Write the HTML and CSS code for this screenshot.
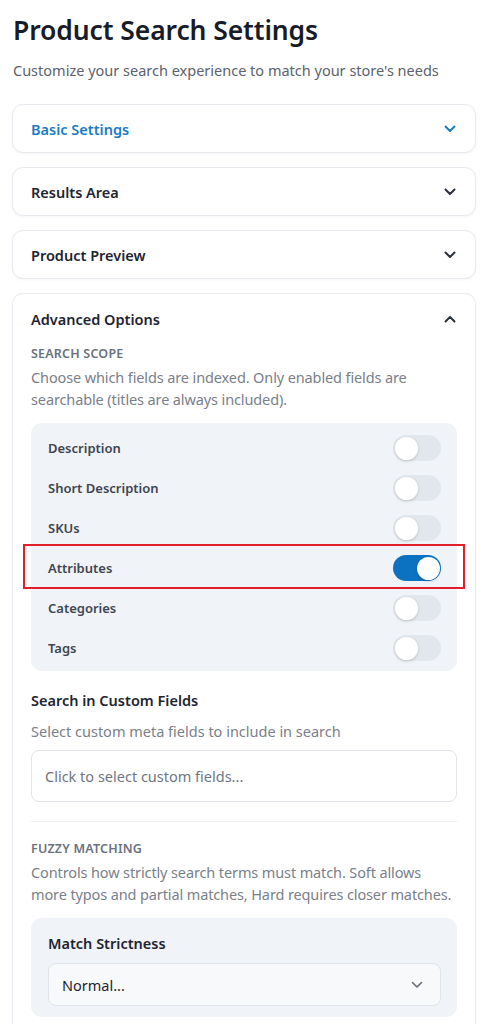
FILE: index.html
```html
<!DOCTYPE html>
<html lang="en">
<head>
<meta charset="utf-8">
<title>Product Search Settings</title>
<link rel="stylesheet" href="styles.css">
</head>
<body>
<div class="page">
  <h1 class="title">Product Search Settings</h1>
  <p class="subtitle">Customize your search experience to match your store's needs</p>

  <div class="cards">
    <section class="card">
      <div class="card-head active">
        <span>Basic Settings</span>
        <svg class="chev" width="12" height="8" viewBox="0 0 12 8"><polyline points="1.5,1.5 6,6 10.5,1.5" fill="none" stroke="currentColor" stroke-width="2" stroke-linecap="round" stroke-linejoin="round"/></svg>
      </div>
    </section>
    <section class="card">
      <div class="card-head">
        <span>Results Area</span>
        <svg class="chev" width="12" height="8" viewBox="0 0 12 8"><polyline points="1.5,1.5 6,6 10.5,1.5" fill="none" stroke="currentColor" stroke-width="2" stroke-linecap="round" stroke-linejoin="round"/></svg>
      </div>
    </section>
    <section class="card">
      <div class="card-head">
        <span>Product Preview</span>
        <svg class="chev" width="12" height="8" viewBox="0 0 12 8"><polyline points="1.5,1.5 6,6 10.5,1.5" fill="none" stroke="currentColor" stroke-width="2" stroke-linecap="round" stroke-linejoin="round"/></svg>
      </div>
    </section>
    <section class="card">
      <div class="card-head open">
        <span>Advanced Options</span>
        <svg class="chev" width="12" height="8" viewBox="0 0 12 8"><polyline points="1.5,6.5 6,2 10.5,6.5" fill="none" stroke="currentColor" stroke-width="2" stroke-linecap="round" stroke-linejoin="round"/></svg>
      </div>
      <div class="card-body">
        <div class="section-label">Search Scope</div>
        <p class="desc">Choose which fields are indexed. Only enabled fields are searchable (titles are always included).</p>
        <div class="panel toggles">
          <div class="row"><span>Description</span><span class="toggle"><span class="knob"></span></span></div>
          <div class="row"><span>Short Description</span><span class="toggle"><span class="knob"></span></span></div>
          <div class="row"><span>SKUs</span><span class="toggle"><span class="knob"></span></span></div>
          <div class="row highlighted"><span>Attributes</span><span class="toggle on"><span class="knob"></span></span><span class="mark"></span></div>
          <div class="row"><span>Categories</span><span class="toggle"><span class="knob"></span></span></div>
          <div class="row"><span>Tags</span><span class="toggle"><span class="knob"></span></span></div>
        </div>

        <div class="field-title">Search in Custom Fields</div>
        <p class="field-desc">Select custom meta fields to include in search</p>
        <div class="input">Click to select custom fields...</div>

        <hr class="divider">

        <div class="section-label">Fuzzy Matching</div>
        <p class="desc">Controls how strictly search terms must match. Soft allows more typos and partial matches, Hard requires closer matches.</p>
        <div class="panel strict">
          <div class="strict-title">Match Strictness</div>
          <div class="select">
            <span>Normal...</span>
            <svg class="sel-chev" width="12" height="8" viewBox="0 0 12 8"><polyline points="1.5,1.5 6,6 10.5,1.5" fill="none" stroke="currentColor" stroke-width="1.6" stroke-linecap="round" stroke-linejoin="round"/></svg>
          </div>
        </div>
      </div>
    </section>
  </div>
</div>
</body>
</html>
```

FILE: styles.css
```css
* { box-sizing: border-box; }
html, body { margin: 0; padding: 0; background: #ffffff; }
body {
  font-family: "Noto Sans", "Open Sans", "Liberation Sans", sans-serif;
  color: #1c2230;
}
.page { padding: 13px 12px 0 13px; }
.title {
  margin: 0;
  font-size: 26.5px;
  line-height: 34px;
  font-weight: 600;
  color: #171c28;
  letter-spacing: -0.1px;
}
.subtitle {
  margin: 13px 0 0 0;
  font-size: 14.5px;
  line-height: 20px;
  color: #5b626d;
}
.cards {
  margin: 24px 0 0 -1px;
  display: flex;
  flex-direction: column;
  gap: 14px;
}
.card {
  background: #fff;
  border: 1px solid #e7eaee;
  border-radius: 11px;
  box-shadow: 0 1px 3px rgba(20, 30, 50, 0.04);
}
.card-head {
  height: 47px;
  padding: 0 19px 0 18px;
  display: flex;
  align-items: center;
  justify-content: space-between;
  font-size: 14.5px;
  font-weight: 600;
  color: #1e2431;
}
.card-head.open { height: 48px; padding-top: 1px; }
.card-head.active { color: #1b7cc6; }
.chev { display: block; color: #2a303b; }
.card-head.active .chev { color: #1b7cc6; }
.card-body { padding: 4px 18px 20px 18px; }
.section-label {
  font-size: 12.5px;
  line-height: 16px;
  font-weight: 600;
  text-transform: uppercase;
  color: #6b717c;
  letter-spacing: 0.2px;
}
.desc {
  margin: 4px 0 0 0;
  font-size: 14.5px;
  line-height: 22px;
  color: #7a808a;
  letter-spacing: -0.12px;
}
.panel {
  background: #f0f3f7;
  border-radius: 11px;
}
.toggles {
  margin-top: 13px;
  padding: 5px 16px 3px 17px;
}
.row {
  position: relative;
  height: 40px;
  display: flex;
  align-items: center;
  justify-content: space-between;
  font-size: 13px;
  font-weight: 600;
  color: #3e4551;
}
.toggle {
  position: relative;
  width: 48px;
  height: 26px;
  border-radius: 13px;
  background: #e2e7ee;
  display: block;
}
.knob {
  position: absolute;
  top: 1.5px;
  left: 1.5px;
  width: 23px;
  height: 23px;
  border-radius: 50%;
  background: #fff;
  box-shadow: 0 1px 3px rgba(0, 0, 0, 0.18);
}
.toggle.on { background: #0b72c1; }
.toggle.on .knob { left: 23.5px; }
.mark {
  position: absolute;
  top: -4px;
  bottom: -1px;
  left: -25px;
  right: -24px;
  border: 2.5px solid #e31e2a;
  pointer-events: none;
}
.field-title {
  margin-top: 18px;
  font-size: 14.5px;
  line-height: 22px;
  font-weight: 600;
  color: #1e2431;
}
.field-desc {
  margin: 9px 0 0 0;
  font-size: 14.5px;
  line-height: 22px;
  color: #7a808a;
}
.input {
  margin-top: 8px;
  height: 52px;
  border: 1px solid #e1e5ea;
  border-radius: 8px;
  padding: 0 13px;
  display: flex;
  align-items: center;
  font-size: 14.5px;
  color: #70767f;
  background: #fff;
}
.divider {
  margin: 19px 0 0 0;
  border: 0;
  border-top: 1px solid #eceff2;
}
.divider + .section-label { margin-top: 19px; }
.strict {
  margin-top: 13px;
  padding: 14px 16px 11px 17px;
}
.strict-title {
  font-size: 14.5px;
  line-height: 22px;
  font-weight: 600;
  color: #1e2431;
}
.select {
  margin-top: 9px;
  height: 43px;
  border: 1px solid #e1e5ea;
  border-radius: 8px;
  background: #f8f9fb;
  display: flex;
  align-items: center;
  justify-content: space-between;
  padding: 0 17px 0 13px;
  font-size: 14.5px;
  color: #1e2431;
}
.sel-chev { display: block; color: #666c75; }
```
